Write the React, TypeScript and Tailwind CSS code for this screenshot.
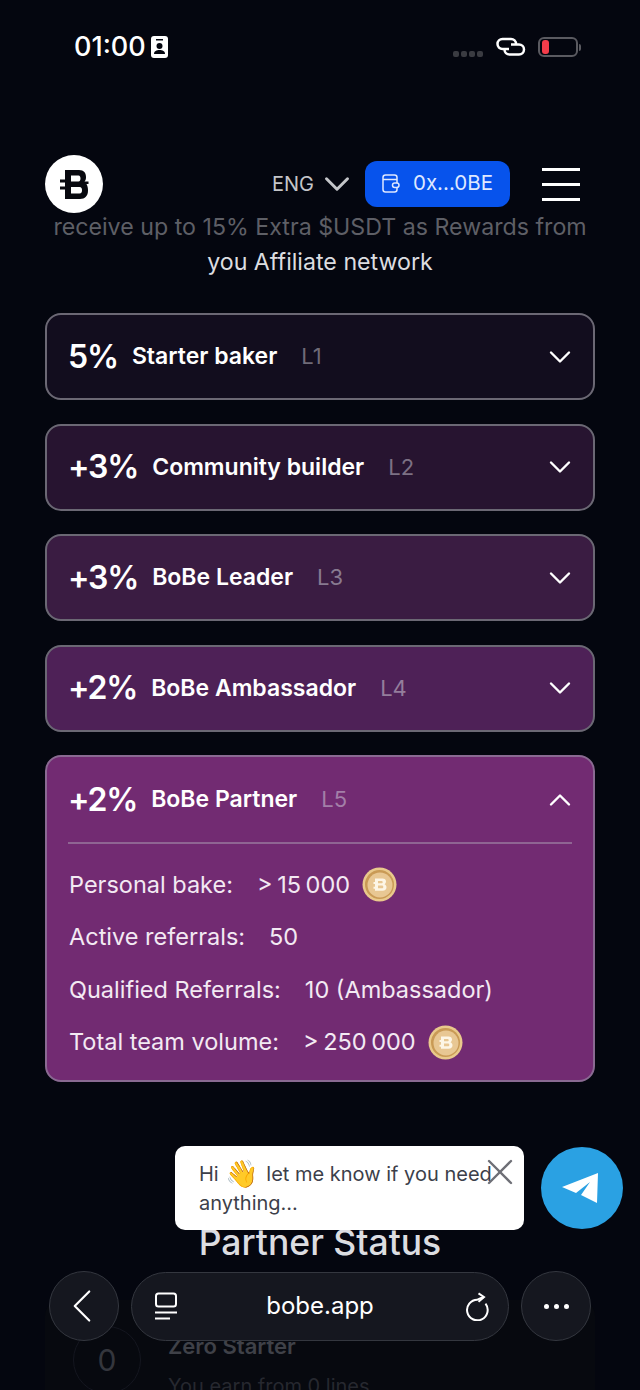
import { ChevronDown, ChevronUp, ChevronLeft, X } from "lucide-react";

const levels = [
  { pct: "5%", name: "Starter baker", level: "L1", bg: "bg-[#120d1e]", tone: "text-[#6f6b78]" },
  { pct: "+3%", name: "Community builder", level: "L2", bg: "bg-[#271430]", tone: "text-[#7c7184]" },
  { pct: "+3%", name: "BoBe Leader", level: "L3", bg: "bg-[#3a1c42]", tone: "text-[#887a90]" },
  { pct: "+2%", name: "BoBe Ambassador", level: "L4", bg: "bg-[#4e2157]", tone: "text-[#947e9c]" },
];

function Logo() {
  return (
    <div className="flex h-[58px] w-[58px] items-center justify-center rounded-full bg-white">
      <svg width="30" height="31" viewBox="0 0 30 31">
        <path
          fillRule="evenodd"
          d="M6 1H20C25 1 27 4 27 8C27 10 26.500 11.500 25.500 12.500H29.500V15H27.500C28.500 17 29 19 29 21.500C29 27 26 30 21 30H6V20.500H1V17.500H6V13.500H1V10.500H6ZM12 6.500V12.500H19.500C21 12.500 21.500 11 21.500 9.500C21.500 8 21 6.500 19.500 6.500ZM12 18V24.500H20.500C22.500 24.500 23 23 23 21.200C23 19.500 22.500 18 20.500 18Z"
          fill="#08090f"
        />
      </svg>
    </div>
  );
}

function Coin() {
  return (
    <svg width="35" height="35" viewBox="0 0 35 35">
      <circle cx="17.500" cy="17.500" r="17" fill="#e9c98c" />
      <circle cx="17.500" cy="17.500" r="14.500" fill="#c99a55" />
      <circle cx="18" cy="18" r="12.500" fill="#e8c793" />
      <path
        fillRule="evenodd"
        d="M13 11.500h7.500c2.200 0 3.500 1.300 3.500 3 0 1.200-.6 2.200-1.500 2.800 1.200.5 2 1.600 2 3 0 2-1.500 3.500-3.800 3.500H13v-2h-1.500v-2H13v-2.800h-1.500v-2H13v-3.500zm3 2.500v2.300h3.500c.7 0 1.200-.5 1.200-1.150S20.200 14 19.500 14H16zm0 4.600v2.600h4c.8 0 1.300-.6 1.300-1.300s-.5-1.300-1.300-1.300h-4z"
        fill="#fdf6e6"
      />
    </svg>
  );
}

function LevelHeader({ pct, name, level, tone }: { pct: string; name: string; level: string; tone: string }) {
  return (
    <div className="flex items-center">
      <span className="text-[32px] leading-none font-semibold tracking-[-1.2px] text-white">{pct}</span>
      <span className="ml-[14px] text-[23px] font-semibold text-white">{name}</span>
      <span className={`ml-6 text-[22px] ${tone}`}>{level}</span>
    </div>
  );
}

function Row({ label, value, coin }: { label: string; value: string; coin?: boolean }) {
  return (
    <div className="flex h-[35px] items-center pl-[1px] text-[23.5px] text-[#f3e9f3]">
      <span>{label}</span>
      <span className={coin ? "ml-6 [word-spacing:-2px]" : "ml-6"}>{value}</span>
      {coin && <span className="ml-3 flex"><Coin /></span>}
    </div>
  );
}

export default function App() {
  return (
    <div
      className="relative h-[1390px] w-[640px] overflow-hidden bg-[#04060f]"
      style={{ fontFamily: "Inter, 'Noto Sans', sans-serif" }}
    >
      {/* status bar */}
      <div className="flex h-[94px] items-center justify-between pr-[62px] pl-[74px]">
        <div className="flex items-center gap-[5px]">
          <span className="text-[27px] font-medium text-white">01:00</span>
          <svg width="17" height="22" viewBox="0 0 17 22">
            <rect width="17" height="22" rx="3" fill="#fff" />
            <rect x="5" y="3" width="7" height="1.500" fill="#04060f" />
            <circle cx="8.500" cy="10" r="3" fill="#04060f" />
            <path d="M3 18c0-3 2.500-4 5.500-4s5.500 1 5.500 4z" fill="#04060f" />
          </svg>
        </div>
        <div className="flex items-center">
          <div className="mt-[14px] flex gap-[2px]">
            <span className="h-[6px] w-[6px] rounded-[2px] bg-[#3a3b41]" />
            <span className="h-[6px] w-[6px] rounded-[2px] bg-[#3a3b41]" />
            <span className="h-[6px] w-[6px] rounded-[2px] bg-[#3a3b41]" />
            <span className="h-[6px] w-[6px] rounded-[2px] bg-[#3a3b41]" />
          </div>
          <svg className="ml-[13px]" width="30" height="20" viewBox="0 0 30 20" fill="none" stroke="#fff" strokeWidth="2.500">
            <path d="M13 12H6.500a5 5 0 0 1 0-10H15a5 5 0 0 1 5 5" />
            <path d="M15 7.500H23a5 5 0 0 1 0 10H13.500a5 5 0 0 1-5-5" />
          </svg>
          <div className="relative ml-[12px] flex h-[20px] w-[40px] items-center rounded-[6px] border-2 border-[#5a5a60] pl-[2px]">
            <span className="h-[14px] w-[7px] rounded-[3px] bg-[#f43c4a]" />
            <span className="absolute -right-[5px] h-[7px] w-[2px] rounded-r bg-[#5a5a60]" />
          </div>
        </div>
      </div>

      {/* app header */}
      <div className="relative z-10 mt-[52px] flex h-[76px] items-center pr-[60px] pl-[45px]">
        <Logo />
        <div className="ml-auto flex items-center text-[20px] text-[#c4c5c9]">
          ENG
          <ChevronDown className="ml-[1.500px] text-[#c4c5c9]" size={42} strokeWidth={1.700} />
        </div>
        <button className="ml-[7.500px] -mt-[1px] flex h-[46px] w-[145px] items-center justify-center gap-[13px] rounded-[12px] bg-[#0753ec] text-[20.5px] text-[#dfe8ff]">
          <svg width="18" height="19" viewBox="0 0 18 19" fill="none" stroke="#dfe8ff" strokeWidth="1.500">
            <rect x="1" y="1" width="14" height="17" rx="2.500" />
            <path d="M1 5.500H15" />
            <rect x="10.500" y="9" width="6.500" height="4.500" rx="2.200" fill="#0753ec" />
          </svg>
          0x...0BE
        </button>
        <div className="ml-[32px] flex w-[38px] flex-col gap-[12px]">
          <span className="h-[3px] bg-white" />
          <span className="h-[3px] bg-white" />
          <span className="h-[3px] bg-white" />
        </div>
      </div>

      {/* intro text */}
      <div className="-mt-[12px] text-center text-[23.2px] leading-[35px]">
        <p className="text-[#5e5f66]">receive up to 15% Extra $USDT as Rewards from</p>
        <p className="text-[#dcdde0]">you Affiliate network</p>
      </div>

      {/* levels */}
      <div className="mx-[45px] mt-[33px] flex flex-col gap-[23.5px]">
        {levels.map((item) => (
          <div
            key={item.level}
            className={`flex h-[87px] items-center justify-between rounded-[16px] border-2 border-[#6b6874] pr-[15px] pl-[21px] ${item.bg}`}
          >
            <LevelHeader pct={item.pct} name={item.name} level={item.level} tone={item.tone} />
            <ChevronDown className="text-white" size={36} strokeWidth={1.600} />
          </div>
        ))}

        <div className="h-[327px] rounded-[16px] border-2 border-[#8a6a92] bg-[#722b72] pr-[21px] pl-[21px]">
          <div className="flex h-[87px] items-center justify-between border-b-2 border-[#8f6593]">
            <LevelHeader pct="+2%" name="BoBe Partner" level="L5" tone="text-[#a37fa8]" />
            <ChevronUp className="-mr-[6px] text-white" size={36} strokeWidth={1.600} />
          </div>
          <div className="mt-[23px] flex flex-col gap-[17.500px]">
            <Row label="Personal bake:" value="> 15 000" coin />
            <Row label="Active referrals:" value="50" />
            <Row label="Qualified Referrals:" value="10 (Ambassador)" />
            <Row label="Total team volume:" value="> 250 000" coin />
          </div>
        </div>
      </div>

      {/* partner status */}
      <h2 className="mt-[138px] text-center text-[35.5px] leading-[46px] font-medium text-[#dcdde1]">Partner Status</h2>
      <div className="mx-[45px] mt-[34px] flex h-[120px] items-start gap-[27px] rounded-[16px] bg-[#07090f] pt-[26px] pl-[28px]">
        <div className="flex h-[68px] w-[68px] items-center justify-center rounded-full border border-[#14161f] text-[30px] text-[#34363d]">0</div>
        <div className="pt-[6px]">
          <p className="text-[22px] leading-[28px] font-semibold text-[#3f4148]">Zero Starter</p>
          <p className="mt-[12px] text-[20px] leading-[28px] text-[#26282f]">You earn from 0 lines</p>
        </div>
      </div>

      {/* chat bubble */}
      <div className="absolute top-[1146px] left-[175px] h-[84px] w-[349px] rounded-[10px] bg-white pt-[14px] pl-6 text-[20px] leading-[29px] text-[#3c3f4a]">
        <p className="flex h-[29px] items-center">
          Hi<span className="mx-[7px] text-[27px] leading-none" style={{ fontFamily: "'Noto Color Emoji', sans-serif" }}>👋</span>let me know if you need
        </p>
        <p>anything...</p>
        <X className="absolute top-[4px] right-[2px] text-[#6e6f76]" size={44} strokeWidth={1.300} />
      </div>
      <div className="absolute top-[1147px] left-[541px] flex h-[82px] w-[82px] items-center justify-center rounded-full bg-[#2aa1e3]">
        <svg className="mr-[4px]" width="38" height="34" viewBox="0 0 38 34" fill="#fff">
          <path d="M37 2 1 16l14 6L29 11 20 24l16 8z" />
        </svg>
      </div>

      {/* browser bar */}
      <div className="absolute top-[1271px] left-[49px] flex w-[542px] items-center justify-between">
        <div className="flex h-[70px] w-[70px] items-center justify-center rounded-full border border-[#34373f] bg-[#15171f]">
          <ChevronLeft className="-ml-[4px] text-white" size={58} strokeWidth={0.900} />
        </div>
        <div className="relative flex h-[69px] w-[378px] items-center justify-center rounded-full border border-[#34373f] bg-[#15171f] text-[24px] text-white">
          <svg className="absolute left-[22px]" width="24" height="28" viewBox="0 0 24 28" fill="none" stroke="#fff" strokeWidth="2">
            <rect x="2" y="1.500" width="20" height="13" rx="2.500" />
            <path d="M1 20.500H23M1 26.500H16" />
          </svg>
          bobe.app
          <svg className="absolute right-[17px]" width="26" height="30" viewBox="0 0 26 30" fill="none" stroke="#fff" strokeWidth="2">
            <path d="M13.500 2.300 19 6l-5.500 4.700" />
            <path d="M18.500 6.200C15 7 13 8.700 12.300 8.700A10.300 10.300 0 1 0 20.500 12.700" />
          </svg>
        </div>
        <div className="flex h-[70px] w-[70px] items-center justify-center gap-[5px] rounded-full border border-[#34373f] bg-[#15171f]">
          <span className="h-[5px] w-[5px] rounded-full bg-white" />
          <span className="h-[5px] w-[5px] rounded-full bg-white" />
          <span className="h-[5px] w-[5px] rounded-full bg-white" />
        </div>
      </div>
    </div>
  );
}
